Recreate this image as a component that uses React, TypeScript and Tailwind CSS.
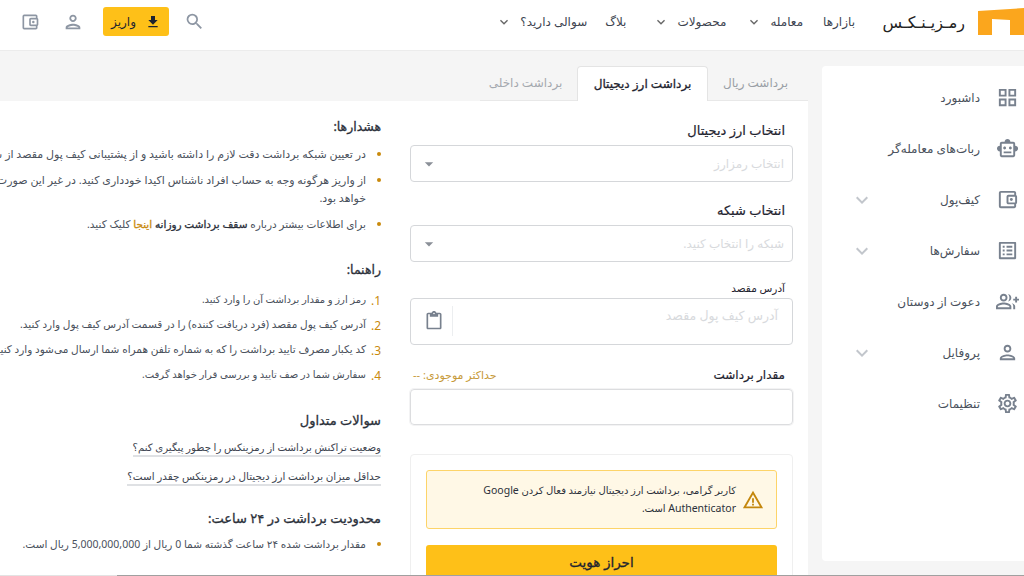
import type { ReactNode } from 'react';
import {
  MdOutlineGridView,
  MdOutlineSmartToy,
  MdOutlineAccountBalanceWallet,
  MdOutlineListAlt,
  MdOutlineGroupAdd,
  MdOutlinePerson,
  MdOutlineSettings,
  MdSearch,
  MdFileDownload,
  MdOutlineContentPaste,
  MdWarningAmber,
  MdExpandMore,
  MdArrowDropDown,
} from 'react-icons/md';

const sidebarItems = [
  { label: 'داشبورد', icon: MdOutlineGridView },
  { label: 'ربات‌های معامله‌گر', icon: MdOutlineSmartToy },
  { label: 'کیف‌پول', icon: MdOutlineAccountBalanceWallet, arrow: true },
  { label: 'سفارش‌ها', icon: MdOutlineListAlt, arrow: true },
  { label: 'دعوت از دوستان', icon: MdOutlineGroupAdd },
  { label: 'پروفایل', icon: MdOutlinePerson, arrow: true },
  { label: 'تنظیمات', icon: MdOutlineSettings },
];

const navItems = [
  { label: 'بازارها', gap: 'ml-[20px]' },
  { label: 'معامله', arrow: true, gap: 'ml-[20px]' },
  { label: 'محصولات', arrow: true, gap: 'ml-[27px]' },
  { label: 'بلاگ', gap: 'ml-[18px]' },
  { label: 'سوالی دارید؟', arrow: true, gap: '' },
];

const guide = [
  { text: 'رمز ارز و مقدار برداشت آن را وارد کنید.', size: 'text-[10px]' },
  { text: 'آدرس کیف پول مقصد (فرد دریافت کننده) را در قسمت آدرس کیف پول وارد کنید.', size: 'text-[10.5px]' },
  { text: 'کد یکبار مصرف تایید برداشت را که به شماره تلفن همراه شما ارسال می‌شود وارد کنید تا برداشت شما ثبت شود.', size: 'text-[10.5px]' },
  { text: 'سفارش شما در صف تایید و بررسی قرار خواهد گرفت.', size: 'text-[10px]' },
];

function Bullet() {
  return <span className="mt-[7px] ml-[11px] h-[4px] w-[4px] shrink-0 rounded-full bg-[#c98a0c]" />;
}

function Header() {
  return (
    <header className="flex h-[51px] items-center justify-between border-b border-[#ececec] bg-white pb-[7px]">
      <div className="flex items-center">
        <svg width="46" height="27" viewBox="0 0 46 27" className="shrink-0">
          <path d="M0 3 L46 0 V27 H32 V12 L14 11 V27 H0 Z" fill="#fba61d" />
        </svg>
        <span className="mr-[13px] w-[84px] text-[16px] text-[#222]">رمـزیـنـکـس</span>
        <nav className="mr-[26px] flex items-center text-[12px] text-[#3d4450]">
          {navItems.map((item) => (
            <div key={item.label} className={`flex items-center ${item.gap}`}>
              <span>{item.label}</span>
              {item.arrow && <MdExpandMore className="mr-[8px] text-[16px] text-[#666]" />}
            </div>
          ))}
        </nav>
      </div>
      <div className="flex items-center pl-[20px]">
        <MdSearch className="ml-[15px] text-[21px] text-[#8d96a3]" />
        <button className="flex h-[29px] w-[66px] items-center justify-center gap-[9px] rounded-[3px] bg-[#fec018] text-[12px] font-medium text-[#1f2430]">
          <MdFileDownload className="text-[16px]" />
          <span>واریز</span>
        </button>
        <MdOutlinePerson className="mr-[19px] text-[22px] text-[#8d96a3]" />
        <MdOutlineAccountBalanceWallet className="mr-[22px] text-[20px] text-[#8d96a3]" />
      </div>
    </header>
  );
}

function Sidebar() {
  return (
    <aside className="h-[495px] w-[202px] shrink-0 rounded-l-[4px] bg-white pt-[6px]">
      {sidebarItems.map((item) => (
        <div key={item.label} className="flex h-[51px] items-center pr-[5px]">
          <item.icon className="shrink-0 text-[23px] text-[#78818e]" />
          <span className="mr-[16px] flex-1 text-[12px] text-[#4a515c]">{item.label}</span>
          {item.arrow && <MdExpandMore className="ml-[28px] text-[24px] text-[#c2c6cc]" />}
        </div>
      ))}
    </aside>
  );
}

function Field({ label, small, size, children, end }: { label: string; small?: boolean; size?: string; children: ReactNode; end?: ReactNode }) {
  return (
    <div>
      <div className="flex items-center justify-between pl-[3px] pr-[8px]">
        <span className={small ? 'text-[10.5px] leading-[16px] text-[#1f2430]' : `${size ?? 'text-[13px]'} leading-[18px] text-[#1f2430] [-webkit-text-stroke:0.2px]`}>
          {label}
        </span>
        {end}
      </div>
      {children}
    </div>
  );
}

function SelectBox({ placeholder }: { placeholder: string }) {
  return (
    <div className="mt-[6px] flex h-[37px] items-center justify-between rounded-[4px] border border-[#d5d7da] px-[8px]">
      <span className="text-[12px] text-[#d8dadd]">{placeholder}</span>
      <MdArrowDropDown className="text-[20px] text-[#8a8f97]" />
    </div>
  );
}

function WithdrawForm() {
  return (
    <div className="mt-[3px] w-[383px] shrink-0">
      <Field label="انتخاب ارز دیجیتال">
        <SelectBox placeholder="انتخاب رمزارز" />
      </Field>
      <div className="mt-[19px]">
        <Field label="انتخاب شبکه">
          <SelectBox placeholder="شبکه را انتخاب کنید." />
        </Field>
      </div>
      <div className="mt-[18px]">
        <Field label="آدرس مقصد" small>
          <div className="mt-[2px] flex h-[47px] items-center justify-between rounded-[4px] border border-[#d5d7da] pb-[2px] pl-[13px] pr-[14px]">
            <span className="mb-[9px] text-[12.5px] text-[#d8dadd]">آدرس کیف پول مقصد</span>
            <div className="flex h-[30px] items-center border-r border-[#eceef0] pr-[8px]">
              <MdOutlineContentPaste className="text-[20px] text-[#78818e]" />
            </div>
          </div>
        </Field>
      </div>
      <div className="mt-[21px]">
        <Field label="مقدار برداشت" size="text-[12px]" end={<span className="text-[11px] leading-[16px] text-[#c79a3a]">حداکثر موجودی: --</span>}>
          <div className="mt-[5px] h-[36px] rounded-[4px] border border-[#dcdddf] ring-1 ring-[#f3f3f4]" />
        </Field>
      </div>
      <div className="mt-[29px] rounded-t-[4px] border border-[#efefef] px-[15px] pt-[15px]">
        <div className="flex h-[59px] items-center rounded-[3px] border border-[#fdd469] bg-[#fff8e6] pr-[12px] pl-[20px]">
          <MdWarningAmber className="shrink-0 text-[22px] text-[#c4870d]" />
          <p className="mr-[6px] pb-[1px] text-[10px] leading-[18px] text-[#2b303a]">
            کاربر گرامی، برداشت ارز دیجیتال نیازمند فعال کردن <span className="text-[10.5px]">Google Authenticator</span> است.
          </p>
        </div>
        <button className="mt-[16px] h-[34px] w-full rounded-[3px] bg-[#fec018] text-[13.5px] text-[#1f2430] [-webkit-text-stroke:0.3px]">
          احراز هویت
        </button>
      </div>
    </div>
  );
}

function Notes() {
  return (
    <div className="mr-[29px] w-[515px] shrink-0 text-[10.5px] text-[#4a515c]">
      <h3 className="text-[12.5px] leading-[18px] text-[#2b303a] [-webkit-text-stroke:0.3px]">هشدارها:</h3>
      <ul className="mt-[9px] space-y-[8px] leading-[18px]">
        <li className="flex">
          <Bullet />
          <span className="whitespace-nowrap text-[11px]">در تعیین شبکه برداشت دقت لازم را داشته باشید و از پشتیبانی کیف پول مقصد از شبکه انتخابی مطمئن شوید.</span>
        </li>
        <li className="flex">
          <Bullet />
          <span className="text-[11px]">از واریز هرگونه وجه به حساب افراد ناشناس اکیدا خودداری کنید. در غیر این صورت مسئولیت آن بر عهده شما خواهد بود.</span>
        </li>
        <li className="flex">
          <Bullet />
          <span>
            برای اطلاعات بیشتر درباره <b className="font-normal text-[#2b303a] [-webkit-text-stroke:0.3px]">سقف برداشت روزانه</b>{' '}
            <b className="font-normal text-[#c98a0c] [-webkit-text-stroke:0.3px]">اینجا</b> کلیک کنید.
          </span>
        </li>
      </ul>
      <h3 className="mt-[28px] text-[12.5px] leading-[18px] text-[#2b303a] [-webkit-text-stroke:0.3px]">راهنما:</h3>
      <ol className="mt-[11px] space-y-[7px] leading-[18px]">
        {guide.map((line, i) => (
          <li key={line.text} className="flex whitespace-nowrap">
            <span className="ml-[9px] w-[6px] translate-y-[2px] text-[12px] text-[#c98a0c]">{`${i + 1}.`}</span>
            <span className={line.size}>{line.text}</span>
          </li>
        ))}
      </ol>
      <h3 className="mt-[28px] text-[13px] leading-[18px] text-[#2b303a] [-webkit-text-stroke:0.3px]">سوالات متداول</h3>
      <div className="mt-[11px] flex flex-col items-start gap-[12px]">
        <a className="border-b-2 border-[#dfe1e4] text-[10.2px] leading-[15px] text-[#3d4450]">وضعیت تراکنش برداشت از رمزینکس را چطور پیگیری کنم؟</a>
        <a className="border-b-2 border-[#dfe1e4] text-[10.4px] leading-[15px] text-[#3d4450]">حداقل میزان برداشت ارز دیجیتال در رمزینکس چقدر است؟</a>
      </div>
      <h3 className="mt-[23px] text-[13px] leading-[18px] text-[#2b303a] [-webkit-text-stroke:0.3px]">محدودیت برداشت در ۲۴ ساعت:</h3>
      <ul className="mt-[8px] leading-[18px]">
        <li className="flex">
          <Bullet />
          <span>مقدار برداشت شده ۲۴ ساعت گذشته شما 0 ریال از 5,000,000,000 ریال است.</span>
        </li>
      </ul>
    </div>
  );
}

export default function App() {
  return (
    <div
      dir="rtl"
      className="relative h-[576px] w-[1024px] overflow-hidden bg-[#f5f5f5] [font-family:'Noto_Sans','DejaVu_Sans',sans-serif]"
    >
      <Header />
      <div className="flex items-start pt-[15px]">
        <Sidebar />
        <main className="mr-[14px] shrink-0">
          <div className="flex h-[35px] text-[12px]">
            <div className="flex w-[100px] items-center justify-center border-b border-[#e8e8e8] pr-[5px] text-[#9a9fa6]">برداشت ریال</div>
            <div className="flex w-[131px] items-center justify-center rounded-t-[4px] border border-b-0 border-[#e4e4e4] bg-white text-[#1f2430] [-webkit-text-stroke:0.3px]">
              برداشت ارز دیجیتال
            </div>
            <div className="flex w-[97px] items-center justify-center border-b border-[#e8e8e8] pr-[6px] text-[#a5a9af]">برداشت داخلی</div>
          </div>
          <div className="flex w-[960px] items-start bg-white pt-[17px] pr-[15px]">
            <WithdrawForm />
            <Notes />
          </div>
        </main>
      </div>
      {/* thin page scrollbar along the bottom edge */}
      <div className="absolute inset-x-0 bottom-0 h-px bg-[#e3e3e3]">
        <div className="absolute top-0 right-0 left-[117px] h-px bg-[#a0a0a0]" />
      </div>
    </div>
  );
}
